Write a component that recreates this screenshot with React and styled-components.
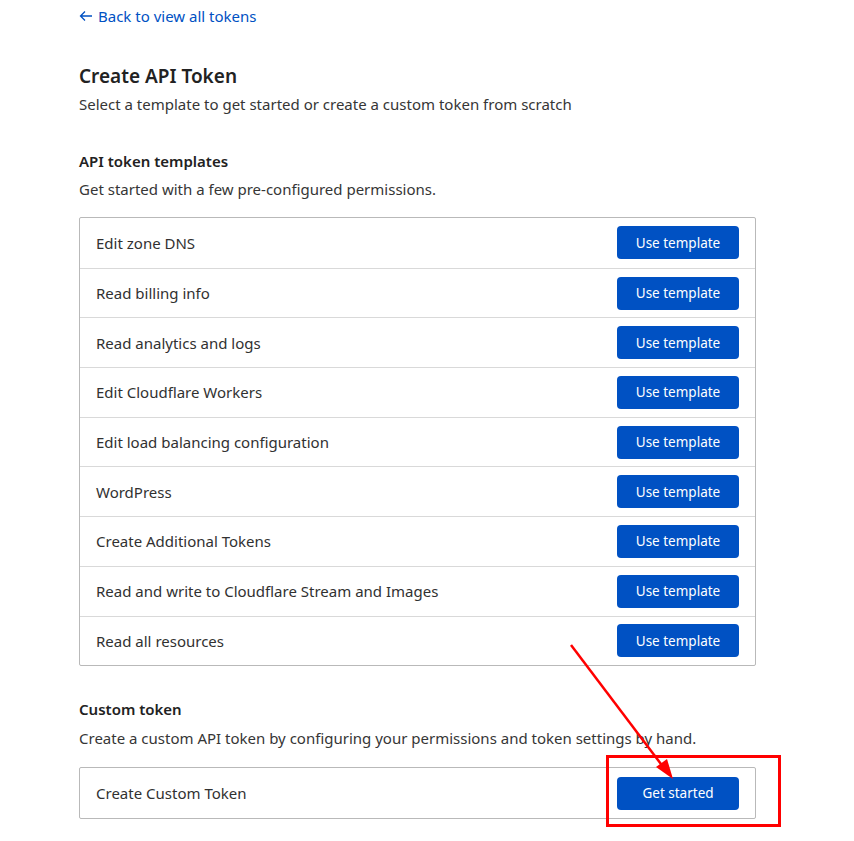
import React from 'react'
import styled, { createGlobalStyle } from 'styled-components'

const templates = [
  'Edit zone DNS',
  'Read billing info',
  'Read analytics and logs',
  'Edit Cloudflare Workers',
  'Edit load balancing configuration',
  'WordPress',
  'Create Additional Tokens',
  'Read and write to Cloudflare Stream and Images',
  'Read all resources'
]

const Global = createGlobalStyle`
  html, body { margin: 0; padding: 0; background: #fff; }
  body {
    font-family: "Noto Sans", "Open Sans", sans-serif;
    color: #313131;
    -webkit-font-smoothing: antialiased;
  }
`

const Page = styled.main`
  position: relative;
  width: 854px;
  height: 841px;
  padding: 4px 98px 0 79px;
  box-sizing: border-box;
  overflow: hidden;
`

const BackLink = styled.a`
  display: inline-flex;
  align-items: center;
  gap: 5px;
  color: #0051c3;
  font-size: 15px;
  line-height: 24px;
  text-decoration: none;
`

const Title = styled.h1`
  margin: 34px 0 0;
  font-size: 19px;
  font-weight: 600;
  line-height: 28px;
  color: #222;
`

const Text = styled.p`
  margin: ${({ top }) => top || 0}px 0 0;
  font-size: 15px;
  line-height: 24px;
  color: #363636;
`

const Heading = styled.h2`
  margin: ${({ top }) => top}px 0 0;
  font-size: 15px;
  font-weight: 600;
  line-height: 24px;
  color: #222;
`

const List = styled.div`
  margin-top: ${({ top }) => top || 16}px;
  border: 1px solid #b9b9b9;
  border-radius: 2px;
`

const Row = styled.div`
  display: flex;
  align-items: center;
  justify-content: space-between;
  height: 49.7px;
  padding: 0 16px;
  box-sizing: border-box;
  font-size: 15px;
  color: #313131;
  & + & { border-top: 1px solid #d9d9d9; }
`

const Button = styled.button`
  width: 122px;
  height: 33px;
  border: 0;
  border-radius: 4px;
  background: #0051c3;
  color: #fff;
  font-family: inherit;
  font-size: 13.5px;
  cursor: pointer;
`

const Overlay = styled.svg`
  position: absolute;
  left: 0;
  top: 0;
  pointer-events: none;
`

export default function App() {
  return (
    <Page>
      <Global />
      <BackLink href="#">
        <svg width="14" height="12" viewBox="0 0 14 12" fill="none" stroke="#0051c3" strokeWidth="1.3">
          <path d="M13 6H1.5M6 1.5 1.5 6 6 10.5" />
        </svg>
        Back to view all tokens
      </BackLink>
      <Title>Create API Token</Title>
      <Text top={2}>Select a template to get started or create a custom token from scratch</Text>

      <Heading top={33}>API token templates</Heading>
      <Text top={4}>Get started with a few pre-configured permissions.</Text>
      <List>
        {templates.map(t => (
          <Row key={t}>
            {t}
            <Button>Use template</Button>
          </Row>
        ))}
      </List>

      <Heading top={31}>Custom token</Heading>
      <Text top={5}>Create a custom API token by configuring your permissions and token settings by hand.</Text>
      <List top={17}>
        <Row>
          Create Custom Token
          <Button>Get started</Button>
        </Row>
      </List>

      <Overlay width="854" height="841" viewBox="0 0 854 841">
        <line x1="571" y1="645" x2="664" y2="768" stroke="#f00" strokeWidth="2.5" />
        <path d="M673 779 L656 767 L667 759 Z" fill="#f00" />
        <rect x="607.5" y="756.5" width="172" height="69" fill="none" stroke="#f00" strokeWidth="3" />
      </Overlay>
    </Page>
  )
}
